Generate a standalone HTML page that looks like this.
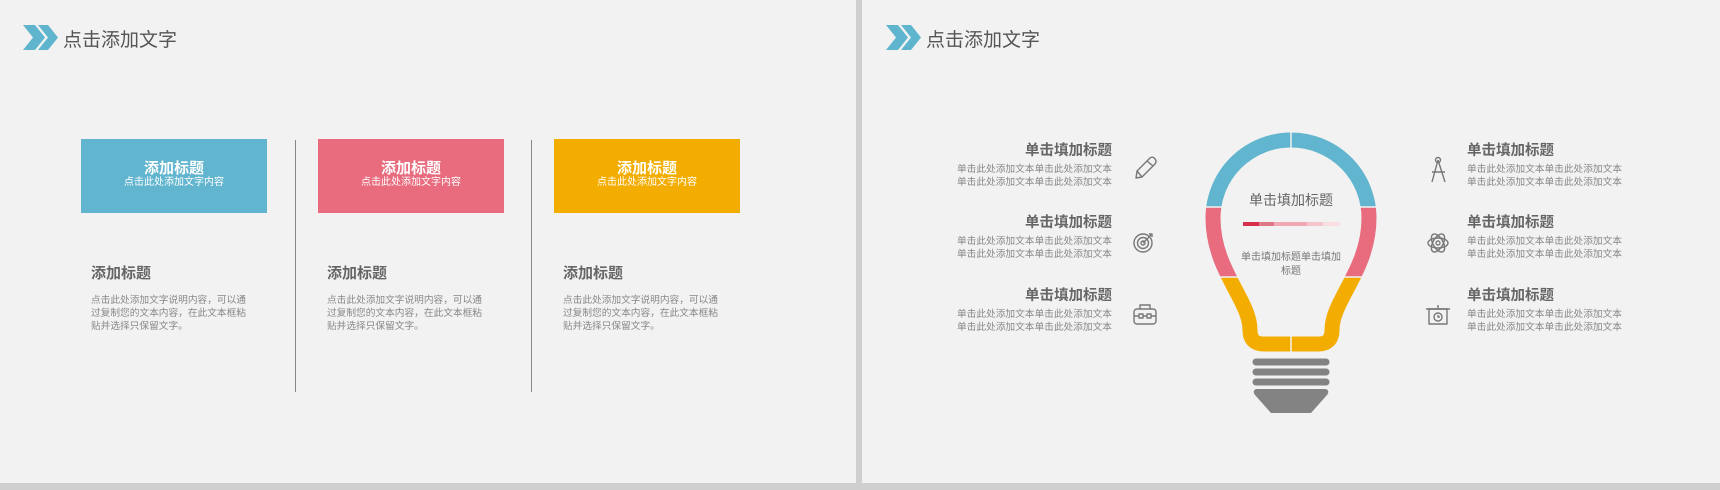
<!DOCTYPE html><html><head><meta charset="utf-8"><style>
*{margin:0;padding:0;box-sizing:border-box}
body{width:1720px;height:490px;background:#cfcfcf;position:relative;overflow:hidden;font-family:"Liberation Sans","Noto Sans CJK SC",sans-serif}
.p{position:absolute;background:#f2f2f2;top:0;height:483px}
.a{position:absolute;white-space:nowrap}
.hd{font-size:19px;color:#555}
.card{position:absolute;top:139px;width:186px;height:74px;color:#fff;text-align:center}
.card b{display:block;font-size:15px;margin-top:22px;line-height:16px}
.card span{display:block;font-size:10px;line-height:12px}
.vl{position:absolute;top:140px;width:1px;height:252px;background:#888}
.t2{font-size:15px;color:#666;font-weight:bold}
.par{font-size:9.7px;color:#888;line-height:13px;width:158px;white-space:normal}
.it{font-size:14.5px;color:#666;font-weight:bold}
.sm{font-size:9.7px;color:#888;line-height:13px}
</style></head><body>
<div class="p" style="left:0;width:856px"></div>
<div class="p" style="left:862px;width:858px"></div>
<svg class="a" style="left:0;top:0" width="1720" height="490">
<g fill="#5fb5ce"><polygon points="23,25 35,25 45,37.5 35,50 23,50 33,37.5"/><polygon points="38,25 48,25 58,37.5 48,50 38,50 48,37.5"/>
<polygon points="886,25 898,25 908,37.5 898,50 886,50 896,37.5"/><polygon points="901,25 911,25 921,37.5 911,50 901,50 911,37.5"/></g>
<defs><clipPath id="cb"><rect x="1100" y="100" width="300" height="107"/></clipPath><clipPath id="cp"><rect x="1100" y="207" width="300" height="70"/></clipPath><clipPath id="cy"><rect x="1100" y="277" width="300" height="100"/></clipPath></defs>
<g fill="none" stroke-width="15">
<path d="M1250 330 C1250 300 1213 270 1213 218 A78 78 0 0 1 1369 218 C1369 270 1332 300 1332 330 Q1332 344 1318 344 L1264 344 Q1250 344 1250 330 Z" stroke="#62b5ce" clip-path="url(#cb)"/>
<path d="M1250 330 C1250 300 1213 270 1213 218 A78 78 0 0 1 1369 218 C1369 270 1332 300 1332 330 Q1332 344 1318 344 L1264 344 Q1250 344 1250 330 Z" stroke="#e86c7e" clip-path="url(#cp)"/>
<path d="M1250 330 C1250 300 1213 270 1213 218 A78 78 0 0 1 1369 218 C1369 270 1332 300 1332 330 Q1332 344 1318 344 L1264 344 Q1250 344 1250 330 Z" stroke="#f2ad00" clip-path="url(#cy)"/>
</g>
<g stroke="#f2f2f2" stroke-width="1.5"><line x1="1291" y1="130" x2="1291" y2="148"/><line x1="1291" y1="335" x2="1291" y2="353"/><line x1="1200" y1="207" x2="1225" y2="207"/><line x1="1357" y1="207" x2="1382" y2="207"/><line x1="1215" y1="277" x2="1245" y2="277"/><line x1="1337" y1="277" x2="1367" y2="277"/></g>
<g stroke="#838383" stroke-width="7" stroke-linecap="round"><line x1="1256" y1="362" x2="1326" y2="362"/><line x1="1256" y1="372" x2="1326" y2="372"/><line x1="1256" y1="382" x2="1326" y2="382"/></g>
<path d="M1256 389 L1326 389 Q1330 391 1327 395 L1311 413 L1271 413 L1255 395 Q1252 391 1256 389Z" fill="#838383"/>
<rect x="1243" y="222" width="16" height="4" fill="#d8304a"/><rect x="1259" y="222" width="15" height="4" fill="#e07585"/><rect x="1274" y="222" width="33" height="4" fill="#f0a9b4"/><rect x="1307" y="222" width="16" height="4" fill="#f6c6ce"/><rect x="1323" y="222" width="17" height="4" fill="#f9dde1"/>
<g fill="none" stroke="#777" stroke-width="1.4" stroke-linejoin="round">
<path d="M1136 178 L1137 171 L1150 158 Q1153 156 1155 159 Q1157 161 1155 164 L1142 177 Z M1137 171 L1142 177 M1147 161 L1153 166"/>
<circle cx="1143" cy="243" r="9"/><circle cx="1143" cy="243" r="5.5"/><circle cx="1143" cy="243" r="2"/><path d="M1143 243 L1151 235 M1149 234 L1152 234 L1152 237"/>
<rect x="1134" y="309" width="22" height="15" rx="3"/><path d="M1140 309 V305 H1150 V309 M1134 316 H1156"/><rect x="1139" y="314" width="4" height="4" fill="#f2f2f2"/><rect x="1147" y="314" width="4" height="4" fill="#f2f2f2"/>
<path d="M1438 160 L1432 182 M1438 160 L1445 182 M1432 172 L1445 172"/><circle cx="1438" cy="160" r="2.5"/>
<ellipse cx="1438" cy="243" rx="10" ry="5"/><ellipse cx="1438" cy="243" rx="10" ry="5" transform="rotate(60 1438 243)"/><ellipse cx="1438" cy="243" rx="10" ry="5" transform="rotate(-60 1438 243)"/><circle cx="1438" cy="243" r="2"/>
<rect x="1429" y="309" width="18" height="15"/><path d="M1426 309 H1450 M1438 309 V305"/><circle cx="1438" cy="317" r="4"/><path d="M1438 315 V317 H1440"/>
</g>
</svg>
<div class="a hd" style="left:63px;top:25px">点击添加文字</div>
<div class="a hd" style="left:926px;top:25px">点击添加文字</div>
<div class="card" style="left:81px;background:#62b5ce"><b>添加标题</b><span>点击此处添加文字内容</span></div>
<div class="card" style="left:318px;background:#e86c7e"><b>添加标题</b><span>点击此处添加文字内容</span></div>
<div class="card" style="left:554px;background:#f2ad00"><b>添加标题</b><span>点击此处添加文字内容</span></div>
<div class="vl" style="left:295px"></div><div class="vl" style="left:531px"></div>
<div class="a t2" style="left:91px;top:262px">添加标题</div>
<div class="a t2" style="left:327px;top:262px">添加标题</div>
<div class="a t2" style="left:563px;top:262px">添加标题</div>
<div class="a par" style="left:91px;top:294px">点击此处添加文字说明内容，可以通过复制您的文本内容，在此文本框粘贴并选择只保留文字。</div>
<div class="a par" style="left:327px;top:294px">点击此处添加文字说明内容，可以通过复制您的文本内容，在此文本框粘贴并选择只保留文字。</div>
<div class="a par" style="left:563px;top:294px">点击此处添加文字说明内容，可以通过复制您的文本内容，在此文本框粘贴并选择只保留文字。</div>
<div class="a" style="left:1241px;top:190px;width:100px;text-align:center;font-size:14px;color:#666">单击填加标题</div>
<div class="a" style="left:1240px;top:251px;width:102px;text-align:center;font-size:10px;color:#777;line-height:14px;white-space:normal">单击填加标题单击填加标题</div>
<div class="a" style="left:952px;top:139px;width:160px;text-align:right"><div class="it">单击填加标题</div><div class="sm" style="margin-top:3px">单击此处添加文本单击此处添加文本<br>单击此处添加文本单击此处添加文本</div></div>
<div class="a" style="left:952px;top:211px;width:160px;text-align:right"><div class="it">单击填加标题</div><div class="sm" style="margin-top:3px">单击此处添加文本单击此处添加文本<br>单击此处添加文本单击此处添加文本</div></div>
<div class="a" style="left:952px;top:284px;width:160px;text-align:right"><div class="it">单击填加标题</div><div class="sm" style="margin-top:3px">单击此处添加文本单击此处添加文本<br>单击此处添加文本单击此处添加文本</div></div>
<div class="a" style="left:1467px;top:139px"><div class="it">单击填加标题</div><div class="sm" style="margin-top:3px">单击此处添加文本单击此处添加文本<br>单击此处添加文本单击此处添加文本</div></div>
<div class="a" style="left:1467px;top:211px"><div class="it">单击填加标题</div><div class="sm" style="margin-top:3px">单击此处添加文本单击此处添加文本<br>单击此处添加文本单击此处添加文本</div></div>
<div class="a" style="left:1467px;top:284px"><div class="it">单击填加标题</div><div class="sm" style="margin-top:3px">单击此处添加文本单击此处添加文本<br>单击此处添加文本单击此处添加文本</div></div>
</body></html>
